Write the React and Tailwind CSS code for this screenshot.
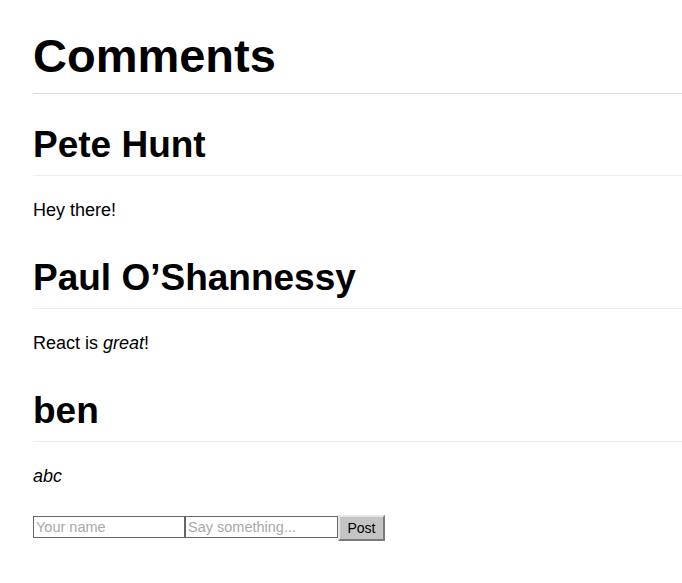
export default function App() {
  const comments = [
    { author: "Pete Hunt", text: <>Hey there!</> },
    { author: "Paul O’Shannessy", text: <>React is <em>great</em>!</> },
    { author: "ben", text: <em>abc</em> },
  ];
  return (
    <div className="min-h-[583px] bg-white pl-[33px] text-black font-['Liberation_Sans',Arial,sans-serif]">
      <h1 className="pt-[28px] pb-[9px] border-b border-[#dddddd] text-[47px] leading-[56px] font-bold">
        Comments
      </h1>
      <div>
        {comments.map((c, i) => (
          <div key={i}>
            <h2
              className={`${i === 0 ? "mt-[29px]" : "mt-[32px]"} pb-[8px] border-b border-[#eeeeee] text-[37px] leading-[44px] font-bold`}
            >
              {c.author}
            </h2>
            <p className="mt-[21px] text-[18px] leading-[27px]">{c.text}</p>
          </div>
        ))}
      </div>
      <form className="mt-[25px] flex items-start" onSubmit={(e) => e.preventDefault()}>
        <input
          type="text"
          placeholder="Your name"
          className="mt-px w-[152px] h-[22px] border border-[#666666] px-[2px] text-[14.5px] font-['Liberation_Sans',Arial,sans-serif] placeholder:text-[#a9a9a9] outline-none"
        />
        <input
          type="text"
          placeholder="Say something..."
          className="mt-px w-[153px] h-[22px] border border-[#666666] px-[2px] text-[14.5px] font-['Liberation_Sans',Arial,sans-serif] placeholder:text-[#a9a9a9] outline-none"
        />
        <button
          type="submit"
          className="w-[47px] h-[26px] bg-[#c4c4c4] border-2 border-t-[#e6e6e6] border-l-[#e6e6e6] border-r-[#7a7a7a] border-b-[#7a7a7a] text-[14px] text-black font-['Liberation_Sans',Arial,sans-serif]"
        >
          Post
        </button>
      </form>
    </div>
  );
}
